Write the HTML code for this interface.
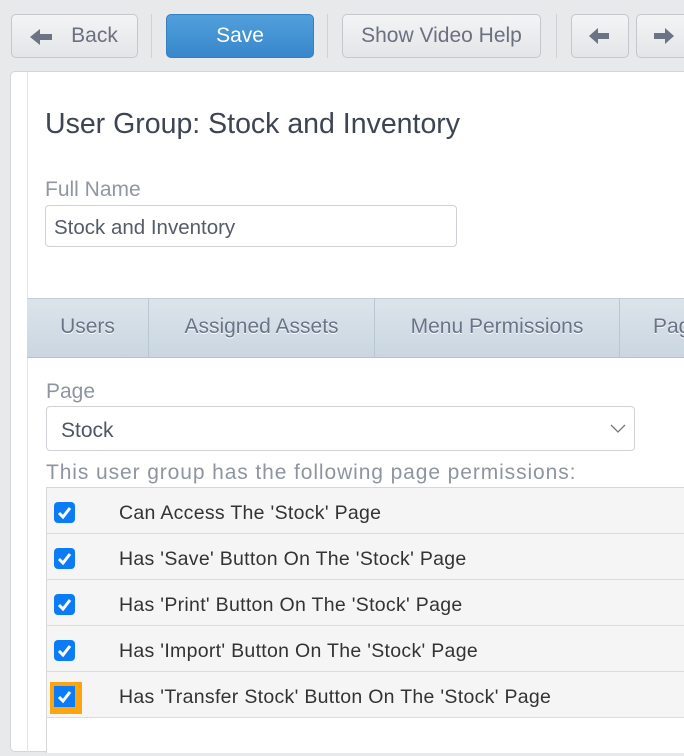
<!DOCTYPE html>
<html><head><style>
*{box-sizing:border-box;margin:0;padding:0}
html{width:684px;height:756px;overflow:hidden}
body{width:684px;height:756px;overflow:hidden;background:#e8e9eb;font-family:"Liberation Sans",sans-serif;position:relative}
.btn{position:absolute;top:14px;height:44px;border:1px solid #c4c7cc;border-radius:5px;background:linear-gradient(#f3f4f5,#e3e5e8);color:#6b7080;font-size:21px;line-height:42px;text-align:center}
.sep{position:absolute;top:14px;width:1px;height:44px;background:#d0d2d6}
.panel{position:absolute;left:10px;top:71px;width:690px;height:681px;background:#fff;border:1px solid #d3d5d8;border-radius:5px;overflow:hidden}
.ab{position:absolute}
.tab{position:absolute;top:298px;height:60px;border-right:1px solid #b9c7d3;color:#6a7388;font-size:21px;line-height:58px;text-align:center;text-shadow:0 1px 0 #fff}
.row{position:absolute;left:46px;width:650px;height:46px;border-bottom:1px solid #dcdcdc;font-size:19.5px;color:#333;line-height:50px}
.cb{position:absolute;left:8px;top:14px;width:21px;height:21px;background:#0b7cf5;border-radius:4px}
.cb svg{position:absolute;left:3px;top:3px}
.row span{position:absolute;left:73px;letter-spacing:0.3px}
</style></head><body>
<div class="btn" style="left:11px;width:127px"><svg width="24" height="20" style="position:absolute;left:18px;top:12px"><path d="M0 10 L10 2 V7 H22 V13 H10 V18 Z" fill="#6b7384"/></svg><span style="margin-left:40px">Back</span></div>
<div class="sep" style="left:151px"></div>
<div class="btn" style="left:166px;width:148px;background:linear-gradient(#519fdb,#3887cc);border-color:#3580c0;color:#fff">Save</div>
<div class="sep" style="left:327px"></div>
<div class="btn" style="left:342px;width:199px">Show Video Help</div>
<div class="sep" style="left:556px"></div>
<div class="btn" style="left:571px;width:58px"><svg width="22" height="18" style="position:absolute;left:17px;top:12px"><path d="M0 9 L9 1 V6 H20 V12 H9 V17 Z" fill="#6b7384"/></svg></div>
<div class="btn" style="left:636px;width:70px"><svg width="22" height="18" style="position:absolute;left:17px;top:12px"><path d="M20 9 L11 1 V6 H0 V12 H11 V17 Z" fill="#6b7384"/></svg></div>
<div class="panel"></div>
<div style="position:absolute;left:27px;top:72px;width:1px;height:680px;background:#e3e4e6"></div>
<div class="ab" style="left:45px;top:108px;font-size:28.5px;color:#3d4452">User Group: Stock and Inventory</div>
<div class="ab" style="left:45px;top:178px;font-size:21px;color:#9097a3">Full Name</div>
<div style="position:absolute;left:45px;top:205px;width:412px;height:42px;border:1px solid #cfd2d6;border-radius:4px;font-size:20.5px;color:#555b68;line-height:44px;padding-left:8px">Stock and Inventory</div>
<div style="position:absolute;left:27px;top:298px;width:660px;height:60px;background:linear-gradient(#dce4eb,#cad6e0);border-top:1px solid #c3ced8;border-bottom:1px solid #b5c2ce"></div>
<div class="tab" style="left:27px;width:122px">Users</div>
<div class="tab" style="left:149px;width:226px">Assigned Assets</div>
<div class="tab" style="left:375px;width:245px">Menu Permissions</div>
<div class="tab" style="left:620px;width:120px;text-align:left;padding-left:33px;border:0">Page</div>
<div class="ab" style="left:46px;top:380px;font-size:21px;color:#8e95a1">Page</div>
<div style="position:absolute;left:46px;top:406px;width:589px;height:45px;border:1px solid #cfd2d6;border-radius:4px;font-size:21px;color:#4f5666;line-height:47px;padding-left:14px">Stock<svg width="16" height="10" style="position:absolute;right:8px;top:17px"><path d="M1 1 L8 8 L15 1" fill="none" stroke="#777" stroke-width="1.3"/></svg></div>
<div class="ab" style="left:46px;top:461px;font-size:21px;color:#8e95a1;letter-spacing:0.9px">This user group has the following page permissions:</div>
<div style="position:absolute;left:46px;top:487px;width:650px;height:280px;background:#fff;border:1px solid #d5d7da"></div>
<div style="position:absolute;left:47px;top:488px;width:650px;height:230px;background:#f5f5f5"></div>
<div class="row" style="top:488px"><div class="cb"><svg width="15" height="15"><path d="M2 8 L6 12 L13 3" fill="none" stroke="#fff" stroke-width="3"/></svg></div><span>Can Access The 'Stock' Page</span></div>
<div class="row" style="top:534px"><div class="cb"><svg width="15" height="15"><path d="M2 8 L6 12 L13 3" fill="none" stroke="#fff" stroke-width="3"/></svg></div><span>Has 'Save' Button On The 'Stock' Page</span></div>
<div class="row" style="top:580px"><div class="cb"><svg width="15" height="15"><path d="M2 8 L6 12 L13 3" fill="none" stroke="#fff" stroke-width="3"/></svg></div><span>Has 'Print' Button On The 'Stock' Page</span></div>
<div class="row" style="top:626px"><div class="cb"><svg width="15" height="15"><path d="M2 8 L6 12 L13 3" fill="none" stroke="#fff" stroke-width="3"/></svg></div><span>Has 'Import' Button On The 'Stock' Page</span></div>
<div class="row" style="top:672px"><div style="position:absolute;left:4px;top:10px;width:32px;height:32px;background:#ffa40f"></div><div class="cb" style="border-radius:0"><svg width="15" height="15"><path d="M2 8 L6 12 L13 3" fill="none" stroke="#fff" stroke-width="3"/></svg></div><span>Has 'Transfer Stock' Button On The 'Stock' Page</span></div>
<div style="position:absolute;left:0;top:753px;width:684px;height:3px;background:#e8e9eb"></div>
</body></html>
